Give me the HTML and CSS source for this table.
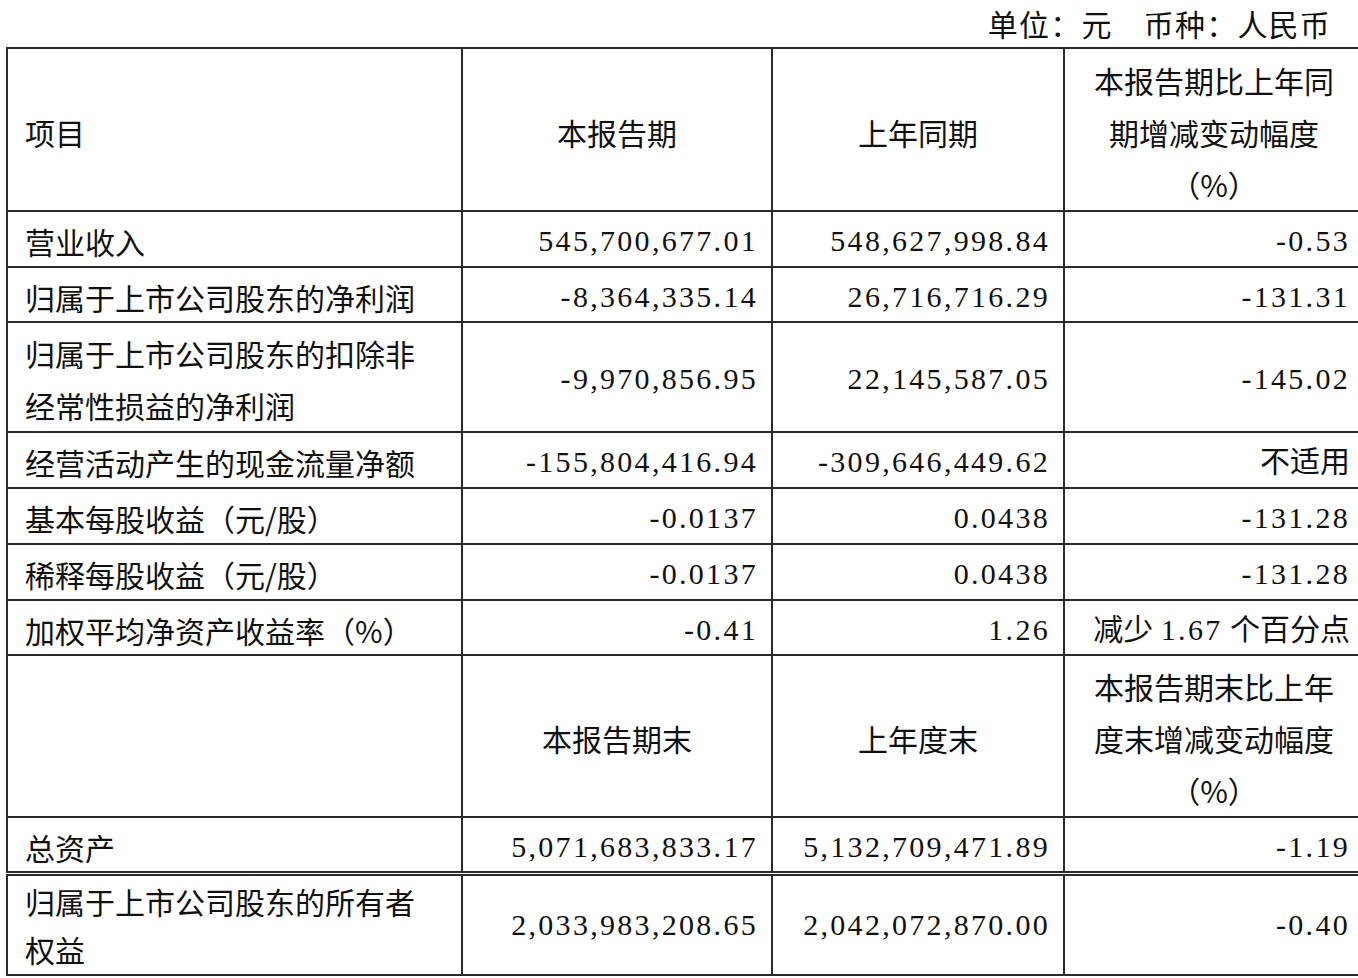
FILE: index.html
```html
<!DOCTYPE html>
<html lang="zh-CN">
<head>
<meta charset="utf-8">
<title>主要会计数据和财务指标</title>
<link rel="stylesheet" href="styles.css">
</head>
<body>
<div class="unit">单位：元　币种：人民币</div>
<table class="fin">
  <colgroup><col class="c1"><col class="c2"><col class="c3"><col class="c4"></colgroup>
  <tr class="rh1">
    <td class="lbl">项目</td>
    <td class="ctr">本报告期</td>
    <td class="ctr">上年同期</td>
    <td class="ctr">本报告期比上年同<br>期增减变动幅度<br>（%）</td>
  </tr>
  <tr class="r56">
    <td class="lbl">营业收入</td>
    <td class="num"><span class="n">545,700,677.01</span></td>
    <td class="num"><span class="n">548,627,998.84</span></td>
    <td class="num"><span class="n">-0.53</span></td>
  </tr>
  <tr class="r55">
    <td class="lbl">归属于上市公司股东的净利润</td>
    <td class="num"><span class="n">-8,364,335.14</span></td>
    <td class="num"><span class="n">26,716,716.29</span></td>
    <td class="num"><span class="n">-131.31</span></td>
  </tr>
  <tr class="r110">
    <td class="lbl">归属于上市公司股东的扣除非<br>经常性损益的净利润</td>
    <td class="num"><span class="n">-9,970,856.95</span></td>
    <td class="num"><span class="n">22,145,587.05</span></td>
    <td class="num"><span class="n">-145.02</span></td>
  </tr>
  <tr class="r56">
    <td class="lbl">经营活动产生的现金流量净额</td>
    <td class="num"><span class="n">-155,804,416.94</span></td>
    <td class="num"><span class="n">-309,646,449.62</span></td>
    <td class="num">不适用</td>
  </tr>
  <tr class="r56">
    <td class="lbl">基本每股收益（元/股）</td>
    <td class="num"><span class="n">-0.0137</span></td>
    <td class="num"><span class="n">0.0438</span></td>
    <td class="num"><span class="n">-131.28</span></td>
  </tr>
  <tr class="r56">
    <td class="lbl">稀释每股收益（元/股）</td>
    <td class="num"><span class="n">-0.0137</span></td>
    <td class="num"><span class="n">0.0438</span></td>
    <td class="num"><span class="n">-131.28</span></td>
  </tr>
  <tr class="r55">
    <td class="lbl">加权平均净资产收益率（%）</td>
    <td class="num"><span class="n">-0.41</span></td>
    <td class="num"><span class="n">1.26</span></td>
    <td class="num">减少 <span class="n">1.67</span> 个百分点</td>
  </tr>
  <tr class="rh2">
    <td class="lbl"></td>
    <td class="ctr">本报告期末</td>
    <td class="ctr">上年度末</td>
    <td class="ctr">本报告期末比上年<br>度末增减变动幅度<br>（%）</td>
  </tr>
  <tr class="r55">
    <td class="lbl">总资产</td>
    <td class="num"><span class="n">5,071,683,833.17</span></td>
    <td class="num"><span class="n">5,132,709,471.89</span></td>
    <td class="num"><span class="n">-1.19</span></td>
  </tr>
</table>
<table class="fin second">
  <colgroup><col class="c1"><col class="c2"><col class="c3"><col class="c4"></colgroup>
  <tr class="r100">
    <td class="lbl">归属于上市公司股东的所有者<br>权益</td>
    <td class="num"><span class="n">2,033,983,208.65</span></td>
    <td class="num"><span class="n">2,042,072,870.00</span></td>
    <td class="num"><span class="n">-0.40</span></td>
  </tr>
</table>
</body>
</html>
```

FILE: styles.css
```css
html, body {
  margin: 0;
  padding: 0;
  background: #ffffff;
  overflow: hidden;
}

body {
  font-family: "Liberation Serif", "Noto Sans CJK SC", serif;
  font-size: 30px;
  color: #111111;
}

.unit {
  height: 47px;
  line-height: 47px;
  text-align: right;
  padding-right: 27px;
  letter-spacing: 1.2px;
  font-family: "Noto Sans CJK SC", sans-serif;
}

.fin {
  border-collapse: collapse;
  table-layout: fixed;
  width: 1357px;
  margin-left: 6px;
}

.fin .c1 { width: 455px; }
.fin .c2 { width: 310px; }
.fin .c3 { width: 292px; }
.fin .c4 { width: 300px; }

.fin td {
  border: 2px solid #2b2b2b;
  padding: 4px 13px 0 17px;
  line-height: 52px;
  vertical-align: middle;
  white-space: nowrap;
  font-family: "Liberation Serif", "Noto Sans CJK SC", serif;
}

.fin td.lbl {
  text-align: left;
  font-family: "Noto Sans CJK SC", sans-serif;
}

.fin td.ctr {
  text-align: center;
  padding-left: 0;
  padding-right: 0;
  font-family: "Noto Sans CJK SC", sans-serif;
}

.fin td.num {
  text-align: right;
}

.n {
  letter-spacing: 2.3px;
}

.second {
  margin-top: 1px;
}

.r56 td, .r55 td {
  line-height: 44px;
}

.r100 td {
  padding-top: 0;
  line-height: 48px;
}

.rh1 { height: 163px; }
.rh2 { height: 162px; }
.r56 { height: 56px; }
.r55 { height: 55px; }
.r110 { height: 110px; }
.r100 { height: 100px; }
```
